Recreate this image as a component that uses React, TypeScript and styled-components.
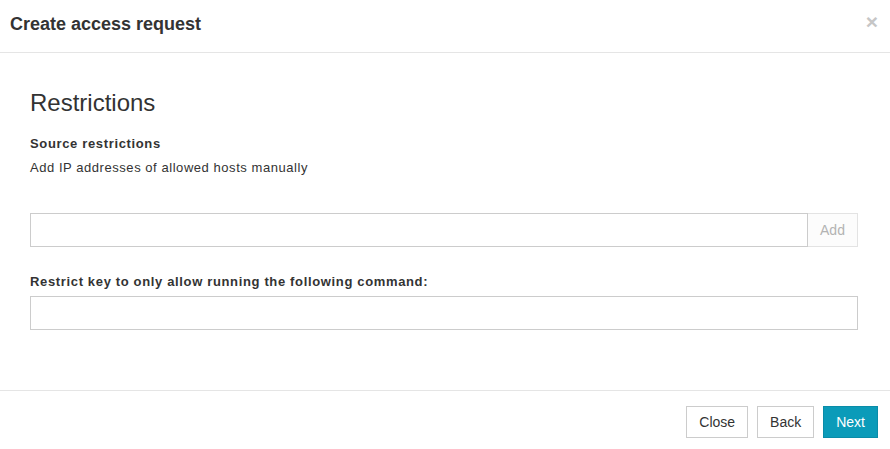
import React from "react";
import styled, { createGlobalStyle } from "styled-components";

const Global = createGlobalStyle`
  html, body { margin: 0; padding: 0; background: #fff; }
  body { font-family: "Liberation Sans", Arial, sans-serif; color: #333; }
  * { box-sizing: border-box; }
`;

const Modal = styled.div`
  width: 890px;
  height: 449px;
  background: #fff;
  display: flex;
  flex-direction: column;
  overflow: hidden;
`;

const Header = styled.div`
  display: flex;
  align-items: flex-start;
  justify-content: space-between;
  padding: 14px 12px 18px 10px;
  border-bottom: 1px solid #e5e5e5;
`;

const Title = styled.h4`
  margin: 0;
  font-size: 18px;
  line-height: 20px;
  font-weight: bold;
  color: #333;
`;

const CloseX = styled.button`
  border: 0;
  background: none;
  padding: 0;
  margin-top: -2px;
  font-family: "Liberation Sans", Arial, sans-serif;
  font-size: 21px;
  font-weight: bold;
  line-height: 20px;
  color: #c6c6c6;
  cursor: pointer;
`;

const Body = styled.div`
  padding: 37px 32px 60px 30px;
  border-bottom: 1px solid #e5e5e5;
`;

const Heading = styled.h3`
  margin: 0 0 19px;
  font-size: 24px;
  line-height: 26px;
  font-weight: normal;
  color: #333;
`;

const Label = styled.div<{ $top?: number; $bottom?: number }>`
  font-size: 13px;
  line-height: 18px;
  font-weight: bold;
  letter-spacing: 0.65px;
  color: #333;
  margin-top: ${(p) => p.$top ?? 0}px;
  margin-bottom: ${(p) => p.$bottom ?? 6}px;
`;

const Help = styled.div`
  font-size: 13px;
  line-height: 18px;
  letter-spacing: 0.55px;
  color: #333;
  margin-bottom: 36px;
`;

const InputGroup = styled.div`
  display: flex;
  height: 34px;
`;

const TextInput = styled.input`
  flex: 1;
  min-width: 0;
  height: 34px;
  border: 1px solid #ccc;
  border-radius: 0;
  padding: 6px 12px;
  font-family: inherit;
  font-size: 14px;
  outline: none;
  display: block;
  width: 100%;
`;

const AddButton = styled.button`
  width: 50px;
  height: 34px;
  border: 1px solid #e3e3e3;
  border-left: none;
  background: #fcfcfc;
  color: #b3b3b3;
  font-family: inherit;
  font-size: 14px;
  padding: 0;
`;

const Footer = styled.div`
  display: flex;
  justify-content: flex-end;
  gap: 9px;
  padding: 15px 12px 0 0;
`;

const Btn = styled.button<{ $primary?: boolean }>`
  height: 32px;
  padding: 0 12px;
  font-family: inherit;
  font-size: 14px;
  border-radius: 0;
  border: 1px solid ${(p) => (p.$primary ? "#0a8ca8" : "#ccc")};
  background: ${(p) => (p.$primary ? "#0b9bb9" : "#fff")};
  color: ${(p) => (p.$primary ? "#fff" : "#333")};
  cursor: pointer;
`;

export default function App() {
  return (
    <>
      <Global />
      <Modal>
        <Header>
          <Title>Create access request</Title>
          <CloseX aria-label="Close">×</CloseX>
        </Header>
        <Body>
          <Heading>Restrictions</Heading>
          <Label>Source restrictions</Label>
          <Help>Add IP addresses of allowed hosts manually</Help>
          <InputGroup>
            <TextInput type="text" />
            <AddButton disabled>Add</AddButton>
          </InputGroup>
          <Label $top={26} $bottom={5}>
            Restrict key to only allow running the following command:
          </Label>
          <TextInput type="text" />
        </Body>
        <Footer>
          <Btn>Close</Btn>
          <Btn>Back</Btn>
          <Btn $primary>Next</Btn>
        </Footer>
      </Modal>
    </>
  );
}
